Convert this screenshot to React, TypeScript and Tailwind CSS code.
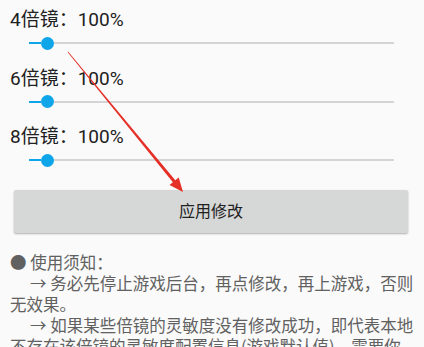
const scopes = ['4倍镜', '6倍镜', '8倍镜'];

const Slider = () => {
  return (
    <div className="ml-[19px] flex h-[14px] w-[365px] items-center">
      <div className="h-[2px] w-[11.5px] bg-[#0ea5e9]" />
      <div className="h-[13px] w-[13px] shrink-0 rounded-full bg-[#0ea5e9]" />
      <div className="h-[2px] flex-1 bg-[#d4d4d4]" />
    </div>
  );
};

export default function App() {
  return (
    <div
      className="relative flex h-[347px] w-[424px] flex-col overflow-hidden bg-[#fafafa] px-[10px] pt-[8px]"
      style={{ fontFamily: 'Roboto, "Noto Sans CJK SC", sans-serif' }}
    >
      <div className="flex flex-col gap-[16.5px]">
        {scopes.map((s) => (
          <div key={s} className="flex flex-col gap-[4px]">
            <div className="h-6 text-[19px] leading-6 text-[#212121]">{s}：100%</div>
            <Slider />
          </div>
        ))}
      </div>

      <button className="ml-[4px] mt-[23px] flex h-[43px] w-[394px] shrink-0 items-center justify-center rounded-[2px] bg-[#d6d7d7] text-[16px] text-[#212121] shadow-[0_1px_2px_rgba(0,0,0,0.3)]">
        应用修改
      </button>

      <div
        className="mt-[18.5px] text-[16.5px] leading-[21px] text-[#616161]"
        style={{ fontFamily: '"Noto Sans CJK SC", sans-serif' }}
      >
        <p>● 使用须知：</p>
        <p className="indent-[20px]">→ 务必先停止游戏后台，再点修改，再上游戏，否则无效果。</p>
        <p className="indent-[20px]">
          → 如果某些倍镜的灵敏度没有修改成功，即代表本地不存在该倍镜的灵敏度配置信息(游戏默认值)，需要你先在游戏中修改一次该倍镜的灵敏度。
        </p>
      </div>

      <svg className="pointer-events-none absolute left-0 top-0" width="424" height="347">
        <polygon
          points="68.3,51.75 175.3,180.2 178.7,177.4 183,192 169.5,185 172.9,182.2 67.7,52.25"
          fill="#e53028"
        />
      </svg>
    </div>
  );
}
